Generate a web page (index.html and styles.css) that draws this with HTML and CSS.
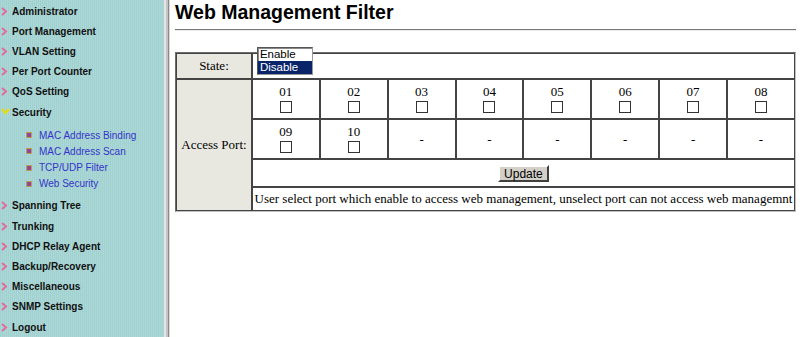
FILE: index.html
```html
<!DOCTYPE html>
<html lang="en">
  <head>
    <meta charset="UTF-8" />
    <title>Web Management Filter</title>
    <link rel="stylesheet" href="styles.css">
  </head>
  <body>
    <div class="menu">
      <div class="item"><svg class="arrow" viewBox="0 0 7 9"><polyline points="1,1 5,4.5 1,8" /></svg>Administrator</div>
      <div class="item"><svg class="arrow" viewBox="0 0 7 9"><polyline points="1,1 5,4.5 1,8" /></svg>Port Management</div>
      <div class="item"><svg class="arrow" viewBox="0 0 7 9"><polyline points="1,1 5,4.5 1,8" /></svg>VLAN Setting</div>
      <div class="item"><svg class="arrow" viewBox="0 0 7 9"><polyline points="1,1 5,4.5 1,8" /></svg>Per Port Counter</div>
      <div class="item"><svg class="arrow" viewBox="0 0 7 9"><polyline points="1,1 5,4.5 1,8" /></svg>QoS Setting</div>
      <div class="item"><svg class="open" viewBox="0 0 9 7"><polyline points="1,1 4.5,5 8,1" /></svg>Security</div>
      <div class="submenu">
        <div class="subitem"><svg class="dot" viewBox="0 0 6 6"><rect x="0.5" y="0.5" width="5" height="5" /></svg>MAC Address Binding</div>
        <div class="subitem"><svg class="dot" viewBox="0 0 6 6"><rect x="0.5" y="0.5" width="5" height="5" /></svg>MAC Address Scan</div>
        <div class="subitem"><svg class="dot" viewBox="0 0 6 6"><rect x="0.5" y="0.5" width="5" height="5" /></svg>TCP/UDP Filter</div>
        <div class="subitem"><svg class="dot" viewBox="0 0 6 6"><rect x="0.5" y="0.5" width="5" height="5" /></svg>Web Security</div>
      </div>
      <div class="item"><svg class="arrow" viewBox="0 0 7 9"><polyline points="1,1 5,4.5 1,8" /></svg>Spanning Tree</div>
      <div class="item"><svg class="arrow" viewBox="0 0 7 9"><polyline points="1,1 5,4.5 1,8" /></svg>Trunking</div>
      <div class="item"><svg class="arrow" viewBox="0 0 7 9"><polyline points="1,1 5,4.5 1,8" /></svg>DHCP Relay Agent</div>
      <div class="item"><svg class="arrow" viewBox="0 0 7 9"><polyline points="1,1 5,4.5 1,8" /></svg>Backup/Recovery</div>
      <div class="item"><svg class="arrow" viewBox="0 0 7 9"><polyline points="1,1 5,4.5 1,8" /></svg>Miscellaneous</div>
      <div class="item"><svg class="arrow" viewBox="0 0 7 9"><polyline points="1,1 5,4.5 1,8" /></svg>SNMP Settings</div>
      <div class="item"><svg class="arrow" viewBox="0 0 7 9"><polyline points="1,1 5,4.5 1,8" /></svg>Logout</div>
    </div>
    <div class="divider"></div>
    <div class="main">
      <h1>Web Management Filter</h1>
      <hr />
      <table class="filter">
        <tr class="state-row">
          <td class="label">State:</td>
          <td class="state" colspan="8">
            <div class="listbox">
              <div class="option">Enable</div>
              <div class="option selected">Disable</div>
            </div>
          </td>
        </tr>
        <tr class="port-row">
          <td class="label" rowspan="4">Access Port:</td>
          <td class="port">01<br /><input type="checkbox" /></td>
          <td class="port">02<br /><input type="checkbox" /></td>
          <td class="port">03<br /><input type="checkbox" /></td>
          <td class="port">04<br /><input type="checkbox" /></td>
          <td class="port">05<br /><input type="checkbox" /></td>
          <td class="port">06<br /><input type="checkbox" /></td>
          <td class="port">07<br /><input type="checkbox" /></td>
          <td class="port">08<br /><input type="checkbox" /></td>
        </tr>
        <tr class="port-row">
          <td class="port">09<br /><input type="checkbox" /></td>
          <td class="port">10<br /><input type="checkbox" /></td>
          <td class="port empty">-</td>
          <td class="port empty">-</td>
          <td class="port empty">-</td>
          <td class="port empty">-</td>
          <td class="port empty">-</td>
          <td class="port empty">-</td>
        </tr>
        <tr class="button-row">
          <td colspan="8"><button type="button">Update</button></td>
        </tr>
        <tr class="note-row">
          <td colspan="8">User select port which enable to access web management, unselect port can not access web managemnt</td>
        </tr>
      </table>
    </div>
  </body>
</html>
```

FILE: styles.css
```css
body {
  display: flex;
  margin: 0;
  height: 337px;
  overflow: hidden;
  background-color: #fff;
}

/* Left menu frame */
.menu {
  width: 164px;
  flex-shrink: 0;
  padding-top: 1px;
  background-color: #a7d7d6;
  background-image: linear-gradient(90deg, rgba(0, 0, 0, 0.035) 1px, transparent 1px),
    linear-gradient(rgba(255, 255, 255, 0.05) 1px, transparent 1px);
  background-size: 2px 2px;
  font-family: "Liberation Sans", Arial, sans-serif;
}
.item {
  display: flex;
  align-items: center;
  height: 20.2px;
  font-size: 10px;
  font-weight: bold;
  color: #111;
}
.arrow {
  width: 7px;
  height: 9px;
  margin: 0 4px 0 1px;
  fill: none;
  stroke: #e46a9c;
  stroke-width: 2;
}
.open {
  width: 9px;
  height: 7px;
  margin: -1px 2px 0 1px;
  fill: none;
  stroke: #e8dc10;
  stroke-width: 2.2;
}
.submenu {
  margin: 5px 0 4px;
}
.subitem {
  display: flex;
  align-items: center;
  height: 16.2px;
  padding-left: 26px;
  font-size: 10px;
  color: #3434c8;
}
.dot {
  width: 6px;
  height: 6px;
  margin-right: 7px;
  fill: #8a48a0;
  stroke: #c8a040;
  stroke-width: 0.8;
}

/* Frame border */
.divider {
  width: 6px;
  flex-shrink: 0;
  background: linear-gradient(90deg, #e4e4e4 0, #e4e4e4 2px, #c4c4c4 2px, #c4c4c4 4px, #8a8a8a 4px, #8a8a8a 5px, #d8d8d8 5px);
}

/* Content frame */
.main {
  flex: 1;
  padding: 0 4px 0 5px;
}
h1 {
  margin: 1px 0 0;
  font-family: "Liberation Sans", Arial, sans-serif;
  font-size: 19.5px;
  font-weight: bold;
  color: #000;
}
hr {
  margin: 5px 0 0;
  border: none;
  border-top: 1px solid #7a7a7a;
  border-bottom: 1px solid #e8e8e8;
}
.filter {
  width: 100%;
  margin-top: 21px;
  border-spacing: 0;
  border: 1px solid;
  border-color: #6c6c6c #c0c0c0 #c0c0c0 #6c6c6c;
  font-family: "Liberation Serif", "Times New Roman", serif;
  font-size: 13px;
  color: #000;
}
.filter td {
  padding: 0;
  border: 1px solid #444;
  color: #000;
  text-align: center;
}
.filter .label {
  width: 74px;
  background-color: #e8e8e0;
}
.state-row td {
  height: 24px;
}
.filter .state {
  position: relative;
  text-align: left;
}
.listbox {
  position: absolute;
  top: -7px;
  left: 4px;
  width: 54px;
  border: 1px solid;
  border-color: #555 #999 #999 #555;
  background: #fff;
  font-family: "Liberation Sans", Arial, sans-serif;
  font-size: 11.5px;
  line-height: 13px;
  box-shadow: inset 1px 1px 0 #888;
}
.option {
  padding-left: 2px;
}
.option.selected {
  background-color: #0a246a;
  color: #fff;
}
.port-row td.port {
  height: 34px;
  padding-top: 4px;
}
.port {
  width: 66px;
  line-height: 15px;
  vertical-align: top;
}
.port-row td.empty {
  height: 38px;
  padding-top: 0;
  vertical-align: middle;
}
input[type="checkbox"] {
  appearance: none;
  width: 12px;
  height: 12px;
  margin: 2px 0 0;
  border: 1px solid #333;
  background: #fff;
  vertical-align: top;
}
.button-row td {
  height: 26px;
}
button {
  padding: 0 4px;
  height: 17px;
  font-family: "Liberation Sans", Arial, sans-serif;
  font-size: 12px;
  color: #000;
  background-color: #d4d0c8;
  border: 2px solid;
  border-color: #fff #404040 #404040 #fff;
}
.note-row td {
  height: 22px;
}
```
